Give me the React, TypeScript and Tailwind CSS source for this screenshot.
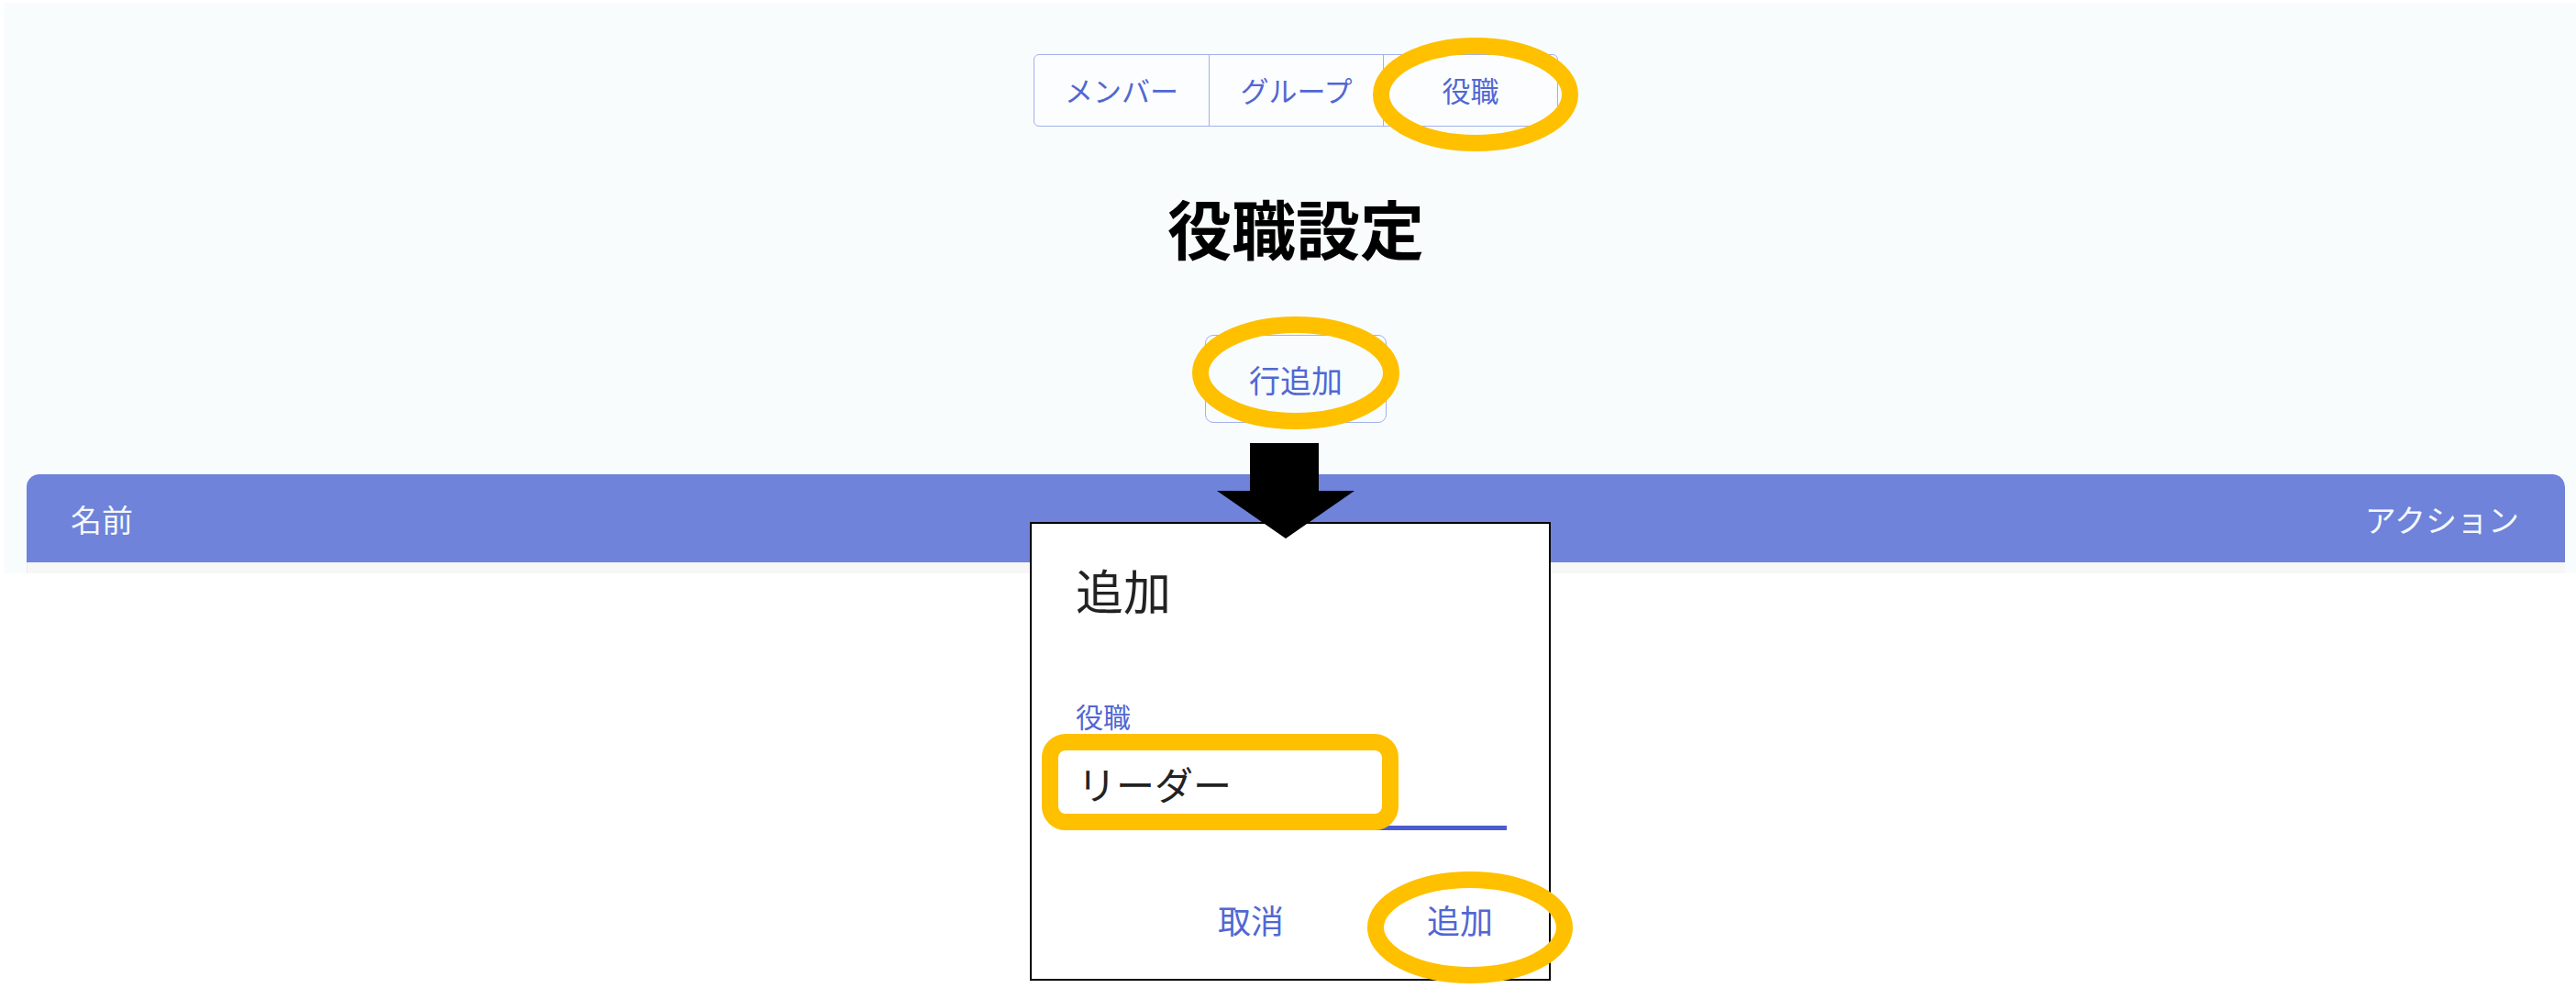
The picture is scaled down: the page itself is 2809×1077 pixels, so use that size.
import React from 'react';

const jp = { fontFamily: '"Noto Sans CJK JP", "Noto Sans", sans-serif' };

const tabs = ['メンバー', 'グループ', '役職'];

// hand-drawn style annotation ring
const Ring = ({ className, w, h }: { className: string; w: number; h: number }) => (
    <svg className={className} width={w} height={h} viewBox={`0 0 ${w} ${h}`}>
        <ellipse cx={w / 2} cy={h / 2} rx={w / 2 - 9} ry={h / 2 - 9} fill="none" stroke="#ffc000" strokeWidth="18" />
    </svg>
);

export default function App() {
    return (
        <div className="relative w-[2809px] h-[1077px] bg-white overflow-hidden" style={jp}>
            {/* page capture */}
            <div className="ml-[4px] pt-[3px] w-[2818px]">
                <div className="h-[622px] bg-[#f8fcfd] flex flex-col items-center">
                    <div className="mt-[56px] flex border border-[#a3b0ee] rounded-[6px] bg-white/40">
                        {tabs.map((t, i) => (
                            <div
                                key={t}
                                className={
                                    i === 0
                                        ? 'w-[190px] h-[77px] flex items-center justify-center text-[31px] text-[#5267d3]'
                                        : 'w-[190px] h-[77px] flex items-center justify-center text-[31px] text-[#5267d3] border-l border-[#a3b0ee]'
                                }
                            >
                                {t}
                            </div>
                        ))}
                    </div>

                    <h1 className="mt-[75px] text-[70px] leading-none font-bold text-black">役職設定</h1>

                    <button className="mt-[82px] w-[198px] h-[96px] border border-[#a3b0ee] rounded-[9px] text-[34px] text-[#5267d3] flex items-center justify-center">
                        行追加
                    </button>

                    <div className="mt-[56px] w-[2768px]">
                        <div className="h-[96px] bg-[#6e83d9] rounded-t-[14px] flex items-center justify-between pl-[48px] pr-[50px] text-[34px] text-white/95">
                            <span>名前</span>
                            <span>アクション</span>
                        </div>
                        <div className="h-[12px] bg-[#f7f7f7] border-l border-[#ececec]" />
                    </div>
                </div>
            </div>

            {/* dialog */}
            <div className="absolute left-[1123px] top-[569px] w-[568px] h-[500px] border-2 border-black bg-white flex flex-col pt-[46px]">
                <div className="pl-[48px] text-[52px] leading-none text-[#222]">追加</div>
                <div className="pl-[48px] mt-[96px] text-[30px] leading-none text-[#5267d3]">役職</div>
                <div className="pl-[50px] mt-[38px] text-[42px] leading-none text-[#222]">リーダー</div>
                <div className="ml-[48px] mt-[25px] w-[470px] h-[5px] bg-[#4a5cd0]" />
                <div className="mt-[79px] flex justify-end gap-[156px] pr-[61px] text-[36px] leading-none text-[#5267d3]">
                    <span>取消</span>
                    <span>追加</span>
                </div>
            </div>

            {/* arrow */}
            <svg className="absolute left-[1327px] top-[483px]" width="150" height="104" viewBox="0 0 150 104">
                <polygon points="36,0 111,0 111,52 150,52 75,104 0,52 36,52" fill="#000" />
            </svg>

            {/* annotations */}
            <Ring className="absolute left-[1497px] top-[41px]" w={224} h={124} />
            <Ring className="absolute left-[1300px] top-[345px]" w={226} h={123} />
            <Ring className="absolute left-[1491px] top-[950px]" w={224} h={122} />
            <div className="absolute left-[1136px] top-[800px] w-[389px] h-[105px] border-[18px] border-[#ffc000] rounded-[26px]" />
        </div>
    );
}
